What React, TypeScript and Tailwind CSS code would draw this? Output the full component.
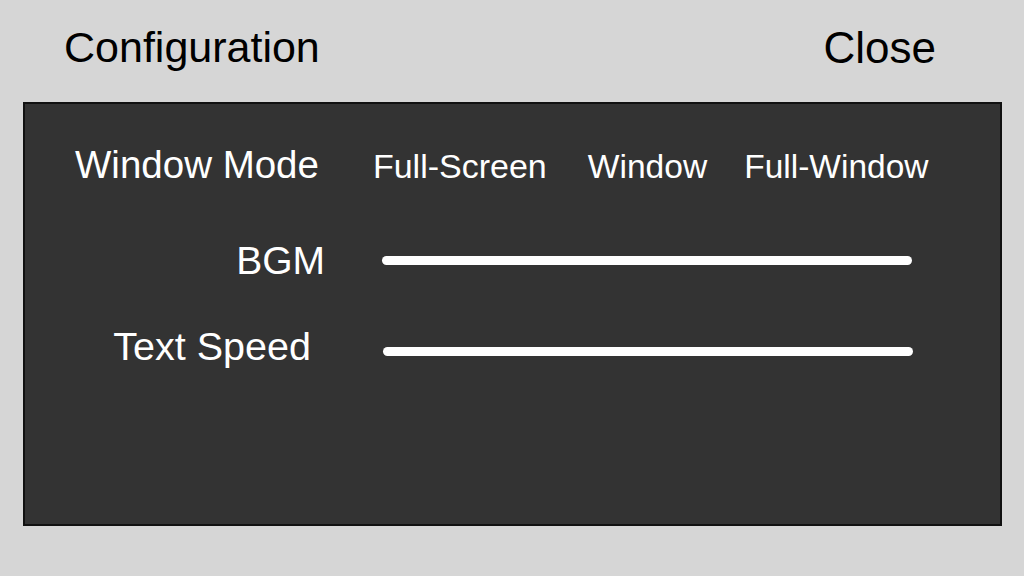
import React from "react";

export default function App() {
  return (
    <div className="w-[1024px] h-[576px] bg-[#d6d6d6] overflow-hidden font-['Liberation_Sans',Arial,sans-serif] leading-none">
      <div className="h-[102px] flex items-start justify-between pt-[26px] pl-[64px] pr-[88px] text-black">
        <div className="text-[43px]">Configuration</div>
        <div className="text-[44px]">Close</div>
      </div>
      <div className="ml-[23px] w-[979px] h-[424px] border-2 border-[#111111] bg-[#333333] text-white">
        <div className="flex items-baseline mt-[42px] pl-[50px]">
          <div className="text-[38.5px]">Window Mode</div>
          <div className="text-[34px] ml-[54px]">Full-Screen</div>
          <div className="text-[33.6px] ml-[41px]">Window</div>
          <div className="text-[33.5px] ml-[37px]">Full-Window</div>
        </div>
        <div className="flex items-start mt-[56px]">
          <div className="w-[300px] text-right text-[39px]">BGM</div>
          <div className="ml-[57px] mt-[15px] w-[530px] h-[9px] rounded-full bg-white" />
        </div>
        <div className="flex items-start mt-[47px]">
          <div className="w-[286px] text-right text-[39.5px]">Text Speed</div>
          <div className="ml-[72px] mt-[20px] w-[530px] h-[9px] rounded-full bg-white" />
        </div>
      </div>
    </div>
  );
}
